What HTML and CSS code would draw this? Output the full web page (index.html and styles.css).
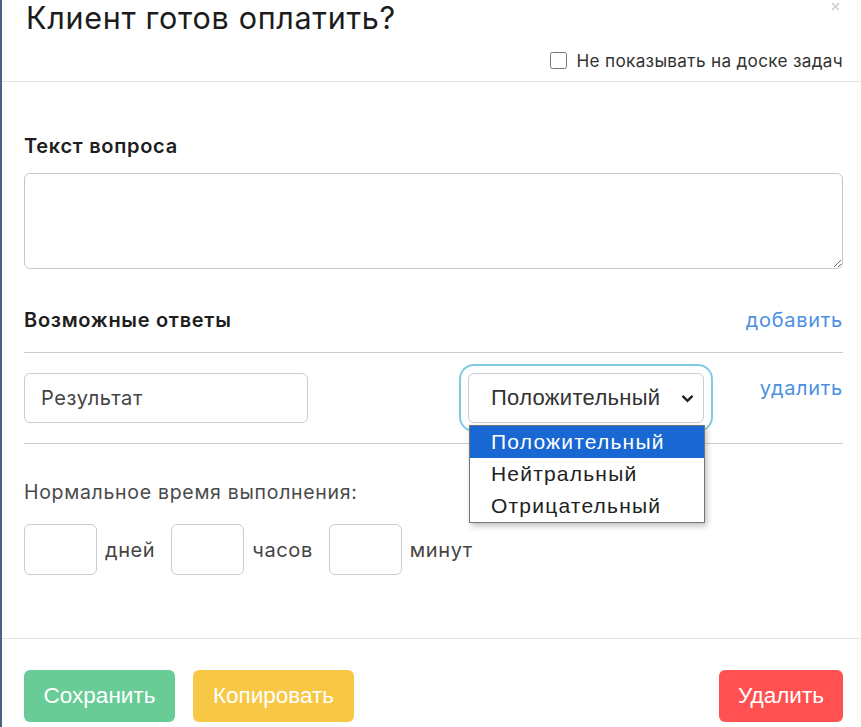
FILE: index.html
```html
<!DOCTYPE html>
<html lang="ru">

<head>
  <meta charset="UTF-8" />
  <meta name="viewport" content="width=device-width, initial-scale=1" />
  <title>Клиент готов оплатить?</title>
  <link rel="stylesheet" href="styles.css">
</head>

<body>
  <div class="modal">
    <div class="modal-header">
      <div class="title-row">
        <h1>Клиент готов оплатить?</h1>
        <button class="close" aria-label="Закрыть">
          <svg width="9" height="9" viewBox="0 0 9 9">
            <path d="M1 1 L8 8 M8 1 L1 8" stroke="#cfcfcf" stroke-width="1.6" />
          </svg>
        </button>
      </div>
      <label class="hide-check">
        <input type="checkbox">
        <span>Не показывать на доске задач</span>
      </label>
    </div>

    <div class="modal-body">
      <div class="field-label">Текст вопроса</div>
      <textarea class="question"></textarea>

      <div class="answers-head">
        <div class="field-label">Возможные ответы</div>
        <a href="#" class="link">добавить</a>
      </div>

      <div class="answer-row">
        <input type="text" class="answer-input" value="Результат">
        <div class="select-wrap">
          <div class="select-box">
            <span>Положительный</span>
            <svg class="chevron" width="13" height="9" viewBox="0 0 13 9">
              <path d="M1.5 1.8 L6.5 6.8 L11.5 1.8" fill="none" stroke="#222" stroke-width="2.4" />
            </svg>
          </div>
          <ul class="dropdown">
            <li class="selected">Положительный</li>
            <li>Нейтральный</li>
            <li>Отрицательный</li>
          </ul>
        </div>
        <a href="#" class="link remove">удалить</a>
      </div>

      <div class="time-label">Нормальное время выполнения:</div>
      <div class="time-row">
        <input type="text" class="time-input"><span>дней</span>
        <input type="text" class="time-input"><span>часов</span>
        <input type="text" class="time-input"><span>минут</span>
      </div>
    </div>

    <div class="modal-footer">
      <button class="btn btn-save">Сохранить</button>
      <button class="btn btn-copy">Копировать</button>
      <button class="btn btn-delete">Удалить</button>
    </div>
  </div>
</body>

</html>
```

FILE: styles.css
```css
html,
body {
  margin: 0;
  padding: 0;
  height: 100%;
  font-family: Inter, "Noto Sans", sans-serif;
  background-color: #4b6380;
  color: #222;
  overflow: hidden;
}

.modal {
  margin-left: 2px;
  min-height: 100%;
  background: white;
}

.modal-header {
  padding: 0 18px 10px 24px;
  border-bottom: 1px solid #e4e4e4;
}

.title-row {
  display: flex;
  justify-content: space-between;
  align-items: flex-start;
}

h1 {
  margin: 0;
  padding-top: 1px;
  font-size: 30.5px;
  line-height: 34px;
  font-weight: 400;
  letter-spacing: 0.7px;
  color: #1c1c1c;
}

.close {
  display: flex;
  border: none;
  background: none;
  padding: 0;
  margin: 2px 3px 0 0;
  cursor: pointer;
}

.hide-check {
  display: flex;
  justify-content: flex-end;
  align-items: center;
  gap: 10px;
  margin-top: 14px;
  height: 22px;
  font-size: 17.2px;
  letter-spacing: 0.3px;
  color: #333;
}

.hide-check input {
  width: 17px;
  height: 17px;
  margin: 0;
  accent-color: #555;
}

.modal-body {
  padding: 52px 18px 63px 22px;
}

.field-label {
  font-size: 20px;
  line-height: 24px;
  font-weight: 600;
  letter-spacing: 0.7px;
  color: #1e1e1e;
}

.question {
  display: block;
  box-sizing: border-box;
  width: 100%;
  height: 96px;
  margin-top: 15px;
  border: 1px solid #c4c7cf;
  border-radius: 6px;
  font-family: inherit;
}

.answers-head {
  display: flex;
  justify-content: space-between;
  margin-top: 39px;
  padding-bottom: 20px;
  border-bottom: 1px solid #c9ccd6;
}

.link {
  color: #4d8fe4;
  text-decoration: none;
  font-size: 20px;
  line-height: 24px;
  letter-spacing: 0.7px;
}

.answer-row {
  display: flex;
  align-items: flex-start;
  padding: 20px 0;
  border-bottom: 1px solid #c9ccd6;
}

.answer-input {
  box-sizing: border-box;
  width: 284px;
  height: 50px;
  margin: 0;
  padding: 0 16px;
  border: 1px solid #c9ccd6;
  border-radius: 6px;
  font-family: inherit;
  font-size: 20px;
  letter-spacing: 0.6px;
  color: #444;
}

.select-wrap {
  position: relative;
  width: 236px;
  margin-left: 160px;
}

.select-box {
  box-sizing: border-box;
  height: 50px;
  display: flex;
  align-items: center;
  justify-content: space-between;
  padding: 0 9px 0 22px;
  border: 1px solid #c9ccd6;
  border-radius: 6px;
  outline: 2px solid #7fcbe2;
  outline-offset: 7px;
  font-family: "Liberation Sans", Arial, sans-serif;
  font-size: 22px;
  letter-spacing: 0.3px;
  color: #333;
}

.chevron {
  margin-top: 1px;
}

.dropdown {
  position: absolute;
  top: 52px;
  left: 1px;
  width: 236px;
  box-sizing: border-box;
  margin: 0;
  padding: 0;
  list-style: none;
  background: white;
  border: 1px solid #767676;
  box-shadow: 2px 3px 6px rgba(0, 0, 0, 0.25);
  font-family: "Liberation Sans", Arial, sans-serif;
  font-size: 21px;
  letter-spacing: 1.2px;
  color: #222;
}

.dropdown li {
  height: 32px;
  line-height: 32px;
  padding-left: 21px;
}

.dropdown li.selected {
  background-color: #1967d2;
  color: white;
}

.remove {
  margin-left: auto;
  padding-top: 3px;
}

.time-label {
  margin-top: 37px;
  font-size: 19.5px;
  line-height: 22px;
  letter-spacing: 0.7px;
  color: #4a4a4a;
}

.time-row {
  display: flex;
  align-items: center;
  margin-top: 21px;
  font-size: 20px;
  letter-spacing: 0.6px;
  color: #444;
}

.time-input {
  box-sizing: border-box;
  width: 73px;
  height: 51px;
  margin: 0;
  border: 1px solid #c9ccd6;
  border-radius: 6px;
}

.time-row span {
  margin: 0 16px 0 8px;
}

.modal-footer {
  display: flex;
  gap: 18px;
  padding: 31px 18px 0 22px;
  border-top: 1px solid #e4e4e4;
}

.btn {
  height: 52px;
  padding: 0;
  border: none;
  border-radius: 6px;
  color: white;
  font-family: "Liberation Sans", Arial, sans-serif;
  font-size: 22.5px;
  cursor: pointer;
}

.btn-save {
  width: 151px;
  background-color: #69cc97;
}

.btn-copy {
  width: 161px;
  background-color: #f8c745;
}

.btn-delete {
  width: 124px;
  margin-left: auto;
  background-color: #ff5151;
}
```
